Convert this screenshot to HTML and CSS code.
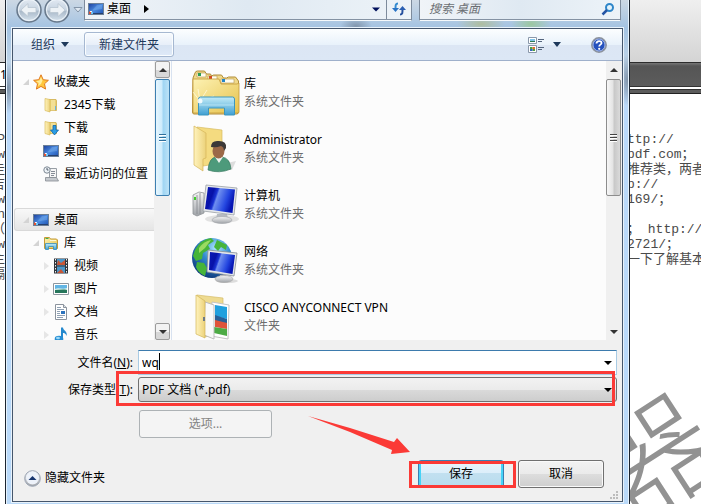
FILE: index.html
```html
<!DOCTYPE html>
<html lang="zh-CN">
<head>
    <meta charset="UTF-8">
    <meta name="viewport" content="width=device-width, initial-scale=1.0">
    <title>另存为</title>
    <link rel="stylesheet" href="styles.css">
</head>
<body>
    <!-- Shared icon shapes -->
    <svg class="defs" width="0" height="0" aria-hidden="true">
        <defs>
            <linearGradient id="g-blue" x1="0" y1="0" x2="1" y2="1">
                <stop offset="0" stop-color="#1c3f9c"/><stop offset=".5" stop-color="#4a8be0"/><stop offset="1" stop-color="#1d4fae"/>
            </linearGradient>
            <linearGradient id="g-screen" x1="0" y1="0" x2="1" y2=".3">
                <stop offset="0" stop-color="#0a18b8"/><stop offset=".3" stop-color="#0712a8"/><stop offset=".42" stop-color="#1a34d4"/><stop offset=".48" stop-color="#6f8ff0"/><stop offset=".8" stop-color="#2446e0"/><stop offset="1" stop-color="#0716b4"/>
            </linearGradient>
            <linearGradient id="g-folder" x1="0" y1="0" x2="1" y2="1">
                <stop offset="0" stop-color="#fdf2b4"/><stop offset="1" stop-color="#e6c24c"/>
            </linearGradient>
            <linearGradient id="g-flap" x1="0" y1="0" x2="1" y2="0">
                <stop offset="0" stop-color="#fff3bd"/><stop offset="1" stop-color="#ecd27a"/>
            </linearGradient>
            <linearGradient id="g-aqua" x1="0" y1="0" x2="0" y2="1">
                <stop offset="0" stop-color="#c3ecf8"/><stop offset="1" stop-color="#3f9fd2"/>
            </linearGradient>
            <linearGradient id="g-metal" x1="0" y1="0" x2="0" y2="1">
                <stop offset="0" stop-color="#f6f6f6"/><stop offset="1" stop-color="#9fa3a8"/>
            </linearGradient>
            <radialGradient id="g-globe" cx=".6" cy=".25" r=".8">
                <stop offset="0" stop-color="#aee6ff"/><stop offset=".45" stop-color="#3189cf"/><stop offset="1" stop-color="#0c3578"/>
            </radialGradient>
            <linearGradient id="g-nav" x1="0" y1="0" x2="0" y2="1">
                <stop offset="0" stop-color="#e4ebf3"/><stop offset=".5" stop-color="#c7d4e1"/><stop offset=".55" stop-color="#a9b9c9"/><stop offset="1" stop-color="#dbe7f1"/>
            </linearGradient>
        </defs>
        <symbol id="i-desktop" viewBox="0 0 16 16">
            <rect x=".5" y="2.500" width="15" height="11" fill="url(#g-blue)" stroke="#6c8097"/>
            <path d="M1 12h14v1H1z" fill="#26406e"/>
            <path d="M4 9.500 9 4h5v4z" fill="#8bbcf2" opacity=".35"/>
            <path d="M1 10.500h2V13H1z" fill="#e3502e"/><path d="M3 11h2v2H3z" fill="#6ec4f2"/><path d="M2 10h2v1H2z" fill="#f4f4f4"/>
        </symbol>
        <symbol id="i-folder" viewBox="0 0 16 16">
            <path d="M6 2.500h7l.5 1v10H6z" fill="#e9cf74" stroke="#cfae4c" stroke-width=".8"/>
            <path d="M2 1.500l5 1v12.500l-5-1.500z" fill="url(#g-flap)" stroke="#d9bb5c" stroke-width=".7"/>
            <path d="M9 3v10.500M11 3v10.500" stroke="#fbf0b9"/><path d="M12.500 9v4" stroke="#6cb2dd"/>
        </symbol>
        <symbol id="i-library" viewBox="0 0 16 16">
            <path d="M1.500 2.500h5l1 1.500h6l1 1v8.500h-13z" fill="url(#g-folder)" stroke="#c59b35"/>
            <path d="M2.500 3.500h3" stroke="#3fae4c"/><path d="M7 5.500h6" stroke="#fff8d6"/>
            <path d="M2.500 14.500v-6h11v6h-3v-3h-5v3z" fill="url(#g-aqua)" stroke="#358cba" stroke-width=".8"/>
        </symbol>
        <symbol id="i-pc" viewBox="0 0 48 48">
            <ellipse cx="30" cy="38" rx="17" ry="4" fill="#000" opacity=".1"/>
            <path d="M1 14l6-3 5 1v20l-7 3-4-2z" fill="url(#g-metal)" stroke="#8e9296" stroke-width=".8"/>
            <path d="M5 14v19M8 12v21" stroke="#85898e" stroke-width=".8"/><path d="M2 16h2v3H2z" fill="#3fce2c"/>
            <path d="M25 33h10l1 5h-12z" fill="#b6bac0"/>
            <ellipse cx="30" cy="39" rx="10" ry="3.500" fill="url(#g-metal)" stroke="#9da1a6" stroke-width=".6"/>
            <path d="M14 4l31 3-3 27-31-4z" fill="#e6e8eb" stroke="#999fa6" stroke-width=".8"/>
            <path d="M16 6l27 2.500-2.500 23.500L13 28z" fill="url(#g-screen)"/>
        </symbol>
    </svg>

    <!-- Document window behind the dialog -->
    <div class="viewer">
        <div class="viewer-tools"></div>
        <div class="viewer-band"><span class="page-no">1</span></div>
        <div class="viewer-rule"></div>
        <div class="doc">
            <div class="doc-left">
                <p>P</p><p>w</p><p>走</p><p>吉</p><p>w</p><p>n</p><p>（</p><p>w</p><p>主</p><p>隔</p>
            </div>
            <div class="doc-right">
                <p>ttp://</p><p>pdf.com；</p><p>推荐类，两者</p><p>p://</p><p>169/；</p><p>&nbsp;</p><p>； http://</p><p>2721/；</p><p>一下了解基本</p>
            </div>
        </div>
        <div class="watermark">器</div>
    </div>

    <div class="dialog">
        <!-- Address row -->
        <div class="titlebar">
            <div class="nav-buttons">
                <button class="round" aria-label="后退"><svg width="26" height="26" viewBox="0 0 26 26"><circle cx="13" cy="13" r="12" fill="url(#g-nav)" stroke="#68798c" stroke-width="1.500"/><circle cx="13" cy="13" r="10.500" fill="none" stroke="#eff5fa"/><path d="M5 13l7-6.500v4h8v5h-8v4z" fill="#edf2f6" stroke="#b9c5d0" stroke-width=".8"/></svg></button>
                <button class="round" aria-label="前进"><svg width="26" height="26" viewBox="0 0 26 26"><circle cx="13" cy="13" r="12" fill="url(#g-nav)" stroke="#68798c" stroke-width="1.500"/><circle cx="13" cy="13" r="10.500" fill="none" stroke="#eff5fa"/><path d="M21 13l-7-6.500v4H6v5h8v4z" fill="#edf2f6" stroke="#b9c5d0" stroke-width=".8"/></svg></button>
                <svg class="history" width="10" height="6" viewBox="0 0 10 6"><path d="M1 .500h8L5 5z" fill="#dfe8f1" stroke="#8495a8"/></svg>
            </div>
            <div class="address">
                <svg width="16" height="16"><use href="#i-desktop"/></svg>
                <span class="crumb">桌面</span>
                <svg width="5" height="8" viewBox="0 0 5 8"><path d="M0 0l5 4-5 4z"/></svg>
                <svg class="drop" width="8" height="5" viewBox="0 0 8 5"><path d="M0 .500h8L4 4.500z" fill="#00105c"/></svg>
                <button class="refresh" aria-label="刷新"><svg width="16" height="16" viewBox="0 0 16 16"><path d="M7 2.500C4.500 2.500 4.500 4 4.500 8" fill="none" stroke="#338bd0" stroke-width="2"/><path d="M1 7h7l-3.500 4z" fill="#2873c5"/><path d="M9 13.500c2.500 0 2.500-1.500 2.500-5" fill="none" stroke="#244f9e" stroke-width="2"/><path d="M8 9h7l-3.500-4z" fill="#2a5fb2"/></svg></button>
            </div>
            <div class="search">
                <input type="text" placeholder="搜索 桌面" aria-label="搜索 桌面">
                <svg width="14" height="14" viewBox="0 0 14 14"><circle cx="8.500" cy="5.500" r="3.500" fill="#e2f3fc" stroke="#2e86c9" stroke-width="2"/><path d="M6 8l-4.500 4.500" stroke="#2455a4" stroke-width="2.500"/></svg>
            </div>
        </div>

        <div class="client">
            <div class="toolbar">
                <button class="organize">组织 <svg width="8" height="5" viewBox="0 0 8 5"><path d="M0 0h8L4 5z"/></svg></button>
                <button class="new-folder">新建文件夹</button>
                <button class="views" aria-label="更改视图">
                    <svg width="17" height="16" viewBox="0 0 17 16"><path d="M.5.5h8v6h-8zM.5 8.500h8v7h-8z" fill="#fff" stroke="#8a98aa"/><path d="M2 2h5v3H2z" fill="#7ec3e8"/><path d="M2 4h5v1H2z" fill="#2f7a55"/><path d="M2 10h2.500v2H2zM4.500 12H7v2H4.500z" fill="#4fa33c"/><path d="M4.500 10H7v2H4.500z" fill="#df6a36"/><path d="M2 12h2.500v2H2z" fill="#3763bd"/><path d="M10 2.500h6M10 4.500h4M10 10.500h6M10 12.500h4" stroke="#54657d"/></svg>
                    <svg width="8" height="5" viewBox="0 0 8 5"><path d="M0 0h8L4 5z"/></svg>
                </button>
                <button class="help" aria-label="帮助"><svg width="16" height="16" viewBox="0 0 16 16"><circle cx="8" cy="8" r="7.200" fill="#2450bd" stroke="#8d939c" stroke-width="1.500"/><circle cx="8" cy="8" r="6" fill="none" stroke="#dce5f8" stroke-width=".7"/><path d="M5.500 6.500C5.500 3.300 10.800 3.300 10.500 6.200 10.400 7.800 8.200 7.500 8.200 9.600" fill="none" stroke="#fff" stroke-width="1.800"/><circle cx="8.200" cy="11.800" r="1.100" fill="#fff"/></svg></button>
            </div>

            <div class="panes">
                <ul class="tree">
                    <li class="open"><svg width="16" height="16" viewBox="0 0 16 16"><path d="M8 .8l2.200 4.900 5.200.6-3.900 3.500 1.100 5.300L8 12.400l-4.600 2.700 1.100-5.300L.6 6.300l5.200-.6z" fill="#ffc63c" stroke="#e17a1f"/><path d="M8 3l1.500 3.600L8 10 5 12l.8-3L3 7l3.500-.5z" fill="#ffed9b"/></svg>收藏夹</li>
                    <li class="sub"><svg width="16" height="16"><use href="#i-folder"/></svg>2345下载</li>
                    <li class="sub"><svg width="16" height="16" viewBox="0 0 16 16"><use href="#i-folder" width="16" height="16"/><path d="M10 5.500h3V10h2.500L11.500 15 7.500 10H10z" fill="#2a9ce4" stroke="#1266a8" stroke-width=".8"/></svg>下载</li>
                    <li class="sub"><svg width="16" height="16"><use href="#i-desktop"/></svg>桌面</li>
                    <li class="sub"><svg width="16" height="16" viewBox="0 0 16 16"><path d="M6.500 2.500h7v9h-7z" fill="#f6f6f6" stroke="#989ea5"/><path d="M8 5.500h4M8 7.500h4M8 9.500h3" stroke="#858c96"/><path d="M2.500 11.500h11l2 3.500h-13z" fill="#c5c9ce" stroke="#858b92" stroke-width=".8"/><circle cx="4" cy="4" r="3.200" fill="#eef3f7" stroke="#7e8994"/><path d="M4 2v2h1.500" fill="none" stroke="#4e5b68"/></svg>最近访问的位置</li>
                    <li class="space"></li>
                    <li class="open selected"><svg width="16" height="16"><use href="#i-desktop"/></svg>桌面</li>
                    <li class="open sub"><svg width="16" height="16"><use href="#i-library"/></svg>库</li>
                    <li class="closed"><svg width="16" height="16" viewBox="0 0 16 16"><path d="M1 .500h14v15H1z" fill="#30353b"/><path d="M4 1h8v6.500H4zM4 8.500h8V15H4z" fill="#4b96c8"/><path d="M5 2l3 3 4-3v5H4zM5 14l3-3 3 4H4z" fill="#c95635"/><path d="M2.500 1v14M13.500 1v14" stroke="#f0f0f0" stroke-dasharray="1.500 1.500"/></svg>视频</li>
                    <li class="closed"><svg width="16" height="16" viewBox="0 0 16 16"><path d="M.5 2.500h15v11H.5z" fill="#fff" stroke="#8d969e"/><path d="M2 4h12v8H2z" fill="#62b5e4"/><path d="M2 8c4-2 7 1 12-1v2H2z" fill="#d9f3ee"/><path d="M2 9c4 0 8-1 12 0v3H2z" fill="#26765b"/></svg>图片</li>
                    <li class="closed"><svg width="16" height="16" viewBox="0 0 16 16"><path d="M2.500.500h8l3 3v12h-11z" fill="#fff" stroke="#8b939d"/><path d="M10.500.500v3h3" fill="#dce2e8" stroke="#8b939d"/><path d="M4 3.500h4M4 5.500h7M4 7.500h3M4 9.500h3M4 11.500h8M4 13.500h6" stroke="#8fa0b3"/><path d="M8 7h4v3H8z" fill="#2d73bd"/></svg>文档</li>
                    <li class="closed"><svg width="16" height="16" viewBox="0 0 16 16"><path d="M8 .500h2c0 3 5 3.500 3.500 8.500C13 6.500 11 6 10 6v6H8z" fill="#2589ce"/><ellipse cx="6" cy="12" rx="4.300" ry="3.300" fill="#278ed4"/><ellipse cx="5" cy="11" rx="2" ry="1.200" fill="#9dd8f5"/></svg>音乐</li>
                </ul>
                <div class="scroll scroll-nav">
                    <span class="arrow up"></span>
                    <span class="thumb"></span>
                    <span class="arrow down"></span>
                </div>

                <ul class="files">
                    <li>
                        <svg width="48" height="48" viewBox="0 0 48 48"><path d="M1 9l2-5q.5-2 2.500-2h7l2 3h4l1 2 2-1h8l2 3h3l2-1h7l3 4v31q0 2-2 2H2q-1.500 0-1.500-2z" fill="#f0d98a" stroke="#b08c38"/><path d="M5 4h9v4H5zM16 7h9v4h-9zM29 10h13v4H29z" fill="#fffdf0" stroke="#b4964d" stroke-width=".6"/><path d="M6 4h3v3H6z" fill="#2c9d54"/><path d="M17 7h3v3h-3z" fill="#d34b22"/><path d="M30 10h3v3h-3z" fill="#2386c8"/><path d="M1 10h26l2 5h16l2-1v29q0 1-1.500 1H2q-1 0-1-1z" fill="url(#g-folder)" stroke="#c49a38" stroke-width=".8"/><path d="M8 32L6 20M8 32l7-11M8 32L1 23M8 32l14-5" stroke="#fffce6" stroke-width=".7"/><path d="M6.500 46V30q0-2 2-2h32q2 0 2 2v16h-10v-7h-16v7z" fill="url(#g-aqua)" stroke="#3c96be"/><path d="M7 36h35" stroke="#d6f5fc" opacity=".6"/><circle cx="8" cy="32" r="2.500" fill="#fff" opacity=".85"/></svg>
                        <div><h3>库</h3><p>系统文件夹</p></div>
                    </li>
                    <li>
                        <svg width="48" height="48" viewBox="0 0 48 48"><path d="M30 39l14-3-4 9H28z" opacity=".12"/><path d="M5 2l25 3v33l-19 3z" fill="#f4db80" stroke="#d7bb62" stroke-width=".7"/><path d="M2 1l12 7v25l-3 1v12L2 40z" fill="url(#g-flap)" stroke="#d5b65a" stroke-width=".7"/><path d="M16 45q1-13 9-13h5q8 1 9 12-12 5-23 1z" fill="#4d9a7b" stroke="#397b62" stroke-width=".7"/><path d="M23 32l4 6 4-6z" fill="#eef3ee"/><ellipse cx="26.500" cy="26" rx="6" ry="7.500" fill="#9c6948"/><path d="M19 22q0-7 8-6 8 0 7 7l-2 3q0-4-3-5-5 2-10 1z" fill="#3c3938"/></svg>
                        <div><h3>Administrator</h3><p>系统文件夹</p></div>
                    </li>
                    <li>
                        <svg width="48" height="48"><use href="#i-pc"/></svg>
                        <div><h3>计算机</h3><p>系统文件夹</p></div>
                    </li>
                    <li>
                        <svg width="48" height="48" viewBox="0 0 48 48"><circle cx="20" cy="21" r="20" fill="url(#g-globe)"/><path d="M3 13Q9 2 19 1l3 3-6 4 2 4-7 4-1 6-6 2-3-5zM25 3l10 5-1 5-5-3-3 4-4-4zM5 25l7 1 3 5-2 8q-7-3-9-9z" fill="#46b43a"/><path d="M7 11q5-7 12-8l-6 8-6 5z" fill="#9adb62"/><ellipse cx="35" cy="44" rx="11" ry="2" opacity=".12"/><path d="M28 38h6v4h-6z" fill="#babec3"/><ellipse cx="32" cy="42" rx="9" ry="3.500" fill="url(#g-metal)" stroke="#aaa" stroke-width=".7"/><path d="M16 13l29 3-3 23-27-4z" fill="#e4e7ea" stroke="#868d94" stroke-width=".8"/><path d="M18 15l25 3-2.500 19L17 33z" fill="url(#g-screen)"/></svg>
                        <div><h3>网络</h3><p>系统文件夹</p></div>
                    </li>
                    <li>
                        <svg width="48" height="48" viewBox="0 0 48 48"><path d="M5 2l26 3v36l-19 3z" fill="#eedb91" stroke="#d5bc69" stroke-width=".7"/><path d="M20 9l17 3-1 34-17-3z" fill="#fff" stroke="#c4c4c4"/><path d="M23 12l12 2v12l-12-3z" fill="#20a0de"/><path d="M23 22l12 4v6l-12-3z" fill="#286098"/><path d="M23 27l12 3v6l-12-2z" fill="#e0543a"/><path d="M22 34l13 2v7l-13-3z" fill="#4dab45"/><path d="M13 9l9 3v34l-10-4z" fill="#f9f9f9" stroke="#bcbcbc"/><path d="M4 2l9 6v37l-9-4z" fill="url(#g-flap)" stroke="#d2b657" stroke-width=".7"/><path d="M12 24v4" stroke="#6d7a85" stroke-width="2"/></svg>
                        <div><h3>CISCO ANYCONNECT VPN</h3><p>文件夹</p></div>
                    </li>
                </ul>
                <div class="scroll scroll-files">
                    <span class="arrow up"></span>
                    <span class="thumb"></span>
                    <span class="arrow down"></span>
                </div>
            </div>

            <form class="footer">
                <label for="filename">文件名(<u>N</u>):</label>
                <div class="field">
                    <input type="text" id="filename" value="wq">
                    <span class="caret"></span>
                </div>
                <label for="filetype">保存类型(<u>T</u>):</label>
                <div class="field">
                    <select id="filetype"><option>PDF 文档 (*.pdf)</option></select>
                    <span class="mark mark-type"></span>
                </div>
                <button type="button" class="options" disabled>选项...</button>
                <div class="actions">
                    <button type="button" class="hide-folders"><svg width="17" height="17" viewBox="0 0 17 17"><circle cx="8.500" cy="8.500" r="7.800" fill="url(#g-metal)" stroke="#9aa4b4"/><circle cx="8.500" cy="8" r="6.500" fill="#edf2fa"/><path d="M4.500 10l4-4 4 4z" fill="#17356e"/></svg>隐藏文件夹</button>
                    <div class="save-wrap">
                        <button type="button" class="btn save">保存</button>
                        <span class="mark mark-save"></span>
                        <svg class="pointer" width="104" height="42" viewBox="0 0 104 42"><path d="M2 0l42 12 44 14 3-4 13 14-19 2 1-4-42-18z" fill="#fb3a36"/></svg>
                    </div>
                    <button type="button" class="btn">取消</button>
                    <svg class="grip" width="8" height="8" viewBox="0 0 8 8"><path d="M6 0h2v2H6zM3 3h2v2H3zM6 3h2v2H6zM0 6h2v2H0zM3 6h2v2H3zM6 6h2v2H6z" fill="#bcbcbc"/></svg>
                </div>
            </form>
        </div>
    </div>
</body>
</html>
```

FILE: styles.css
```css
* {
    box-sizing: border-box;
}

body {
    margin: 0;
    height: 100vh;
    overflow: hidden;
    position: relative;
    background: #fff;
    font-family: "Noto Sans", "Noto Sans CJK SC", sans-serif;
    font-size: 12px;
    line-height: 18px;
    color: #000;
}

ul, p, h3 {
    margin: 0;
    padding: 0;
    list-style: none;
    font-size: 12px;
    font-weight: normal;
}

button, input, select {
    font: inherit;
    color: inherit;
    margin: 0;
    padding: 0;
    border: none;
    background: none;
    outline: none;
}

svg {
    display: block;
    flex: none;
}

.defs {
    position: absolute;
}

/* document window */
.viewer {
    position: relative;
    height: 100vh;
    overflow: hidden;
}

.viewer-tools {
    height: 62px;
    background: linear-gradient(#efefef, #d4d4d4);
}

.viewer-band {
    height: 25px;
    border-top: 1px solid #2c2c2c;
    border-bottom: 1px solid #333;
    background: linear-gradient(#777 0, #555 3px, #5c5c5c 100%);
}

.page-no {
    display: block;
    width: 5px;
    height: 23px;
    line-height: 23px;
    background: #fff;
}

.viewer-rule {
    height: 7px;
    border-top: 2px solid #fff;
    background: linear-gradient(#333 1px, #5c5c5c 1px 4px, #222 4px);
}

.doc {
    display: flex;
    justify-content: space-between;
    padding-top: 38px;
    font-family: "Liberation Mono", "Noto Sans CJK SC", monospace;
    color: #4a4a4a;
}

.doc p {
    height: 15px;
    font-size: 13px;
    line-height: 15px;
    white-space: nowrap;
}

.doc-left {
    width: 5px;
    overflow: hidden;
}

.doc-left p {
    display: flex;
    justify-content: flex-end;
}

.doc-right {
    width: 74px;
    overflow: hidden;
}

.watermark {
    position: absolute;
    right: -10px;
    bottom: -8px;
    font-family: "Noto Sans CJK SC", sans-serif;
    font-size: 120px;
    font-weight: 300;
    line-height: 120px;
    color: #929292;
    transform: rotate(-33deg);
}

/* dialog frame */
.dialog {
    position: absolute;
    top: 0;
    left: 5px;
    right: 71px;
    padding: 0 6px 2px;
    border: solid #1b2430;
    border-width: 0 1px;
    background:
        radial-gradient(ellipse 20px 12px at 525px 24px, #9cc7a0, transparent),
        radial-gradient(ellipse 24px 10px at 475px 24px, #aebd9f, transparent),
        radial-gradient(ellipse 16px 9px at 350px 26px, #8397ad, transparent),
        radial-gradient(ellipse 10px 26px at 2px 88px, #7f93a9, transparent),
        radial-gradient(ellipse 10px 26px at 622px 80px, #7f93a9, transparent),
        linear-gradient(#ccd8e4 0, #a4c3e2 28px, #bdd3e8 60px, #bad9fa 110px, #b9d9f9 100%);
    box-shadow: inset 1px 0 #e6f2fc, inset -1px 0 #e6f2fc;
}

.titlebar {
    display: flex;
    height: 28px;
    padding: 0 2px 0 4px;
}

.nav-buttons {
    display: flex;
    align-items: center;
    width: 68px;
    height: 20px;
    gap: 2px;
}

.round {
    flex: none;
    width: 26px;
    height: 26px;
}

.history {
    margin-left: 1px;
}

.address,
.search {
    display: flex;
    align-items: center;
    height: 21px;
    border: 1px solid #7d8b9c;
    border-top: none;
    border-bottom-color: #f5f9fc;
    background: linear-gradient(90deg, #f0f4f8, #dfe9f2 50%, #edf3f8);
    box-shadow: inset 0 -1px #8492a3;
}

.address {
    flex: 1;
    padding: 0 0 2px 3px;
}

.crumb {
    margin: 0 13px 0 3px;
}

.drop {
    margin-left: auto;
}

.refresh {
    display: flex;
    align-items: center;
    justify-content: center;
    width: 25px;
    height: 20px;
    margin-left: 6px;
    border-left: 1px solid #7d8b9c;
}

.search {
    width: 202px;
    margin-left: 7px;
    padding: 0 5px 2px 9px;
}

.search input {
    flex: 1;
    min-width: 0;
}

.search input::placeholder {
    color: #6c7074;
    font-style: italic;
    opacity: 1;
}

.client {
    border: 1px solid #45566c;
    background: #f0f0f0;
    box-shadow: 0 0 0 1px #e8f2fb;
}

/* toolbar */
.toolbar {
    display: flex;
    align-items: center;
    height: 32px;
    padding: 0 15px 0 18px;
    border-bottom: 1px solid #9fb0cb;
    background: linear-gradient(#fcfeff 0, #e9f2fb 50%, #dce6f4 51%, #dce7f5 100%);
    color: #1e395b;
    fill: #1e395b;
}

.organize,
.views {
    display: flex;
    align-items: center;
    gap: 6px;
}

.new-folder {
    width: 90px;
    height: 25px;
    margin-left: 15px;
    border: 1px solid #a6b8d1;
    border-radius: 3px;
    background: linear-gradient(#f8fbfe 0, #e8eff9 50%, #d6e2f2 51%, #dfeaf8 100%);
    box-shadow: inset 0 0 0 1px #fafdff;
}

.views {
    gap: 8px;
    margin-left: auto;
}

.help {
    margin-left: 30px;
}

/* list panes */
.panes {
    display: flex;
    height: 279px;
    background: #fcfcfc;
}

.tree {
    width: 141px;
    padding-top: 9px;
    overflow: hidden;
}

.tree li {
    position: relative;
    display: flex;
    align-items: center;
    gap: 5px;
    height: 23px;
    padding-left: 20px;
    white-space: nowrap;
}

.tree .sub {
    padding-left: 30px;
}

.tree .closed {
    padding-left: 40px;
}

.tree .selected {
    border: 1px solid #d9d9d9;
    border-right: none;
    border-radius: 3px 0 0 3px;
    margin-left: 1px;
    padding-left: 18px;
    background: linear-gradient(#f8f8f8, #e5e5e5);
}

.open::before {
    content: "";
    position: absolute;
    left: 10px;
    top: 9px;
    border-left: 6px solid transparent;
    border-bottom: 6px solid #d4d4d4;
}

.open.selected::before {
    left: 8px;
    top: 8px;
}

.open.sub::before {
    left: 20px;
}

.closed::before {
    content: "";
    position: absolute;
    left: 31px;
    top: 8px;
    border-left: 5px solid #e6e6e6;
    border-top: 4px solid transparent;
    border-bottom: 4px solid transparent;
}

.scroll {
    display: flex;
    flex-direction: column;
    width: 16px;
    background: #f0f0f0;
}

.arrow {
    display: flex;
    align-items: center;
    justify-content: center;
    height: 17px;
}

.arrow::after {
    content: "";
    border: 4px solid transparent;
}

.up::after {
    border-top: none;
    border-bottom-color: #333;
}

.down {
    margin-top: auto;
}

.down::after {
    border-bottom: none;
    border-top-color: #333;
}

.scroll-nav .arrow {
    margin-left: 1px;
    border: 1px solid #9c9c9c;
    border-radius: 2px;
    background: linear-gradient(#f3f3f3 50%, #d8d8d8 51%);
}

.scroll-nav .down {
    margin-top: auto;
}

.thumb {
    display: flex;
    align-items: center;
    justify-content: center;
    height: 117px;
    margin: 1px 1px 0 0;
    border: 1px solid #8d8d8d;
    border-radius: 2px;
    background: linear-gradient(90deg, #f7f7f7, #e4e4e4 45%, #c8c8c8 55%, #dadada);
}

.thumb::after {
    content: "";
    width: 7px;
    height: 8px;
    background: repeating-linear-gradient(#444 0 1px, #fff 1px 2px, transparent 2px 3px);
}

.scroll-nav .thumb {
    margin: 1px 0 0 1px;
    border-color: #3c7fb1;
    background: linear-gradient(90deg, #e6f6fe, #cdebfc 45%, #9fd5f3 55%, #bde3f7);
}

.scroll-nav .thumb::after {
    background: repeating-linear-gradient(#2f6f9c 0 1px, #fff 1px 2px, transparent 2px 3px);
}

.files {
    flex: 1;
    min-width: 0;
    margin-left: 1px;
    padding: 4px 0 0 20px;
    border-left: 1px solid #d8e2f0;
    overflow: hidden;
}

.files li {
    display: flex;
    align-items: center;
    gap: 4px;
    height: 56px;
}

.files p {
    color: #6d6d6d;
}

/* file name and buttons */
.footer {
    display: grid;
    grid-template-columns: 120px 1fr;
    column-gap: 5px;
    row-gap: 2px;
    padding: 10px 5px 0 0;
}

.footer label {
    align-self: center;
    text-align: right;
    white-space: nowrap;
}

.field {
    position: relative;
    display: flex;
    height: 25px;
}

.field input,
.field select {
    flex: 1;
    min-width: 0;
    padding: 0 4px;
    border: 1px solid #a9cbe4;
    background: #fff;
}

.field input {
    padding-left: 3px;
    border-top-color: #3d7bad;
}

.field select {
    appearance: none;
    padding-left: 3px;
    border-color: #707070;
    border-radius: 3px;
    background: linear-gradient(#f2f2f2 0, #ebebeb 50%, #dadada 51%, #cdcdcd 100%);
}

.field::after {
    content: "";
    position: absolute;
    right: 5px;
    top: 11px;
    border: 4px solid transparent;
    border-top-color: #000;
    border-bottom: none;
    pointer-events: none;
}

.caret {
    position: absolute;
    left: 21px;
    top: 3px;
    width: 1px;
    height: 17px;
    background: #000;
}

.mark {
    position: absolute;
    border: 3px solid #fb3a36;
    pointer-events: none;
}

.mark-type {
    inset: -6px 2px -4px -22px;
}

.mark-save {
    inset: 1px -12px 0 -9px;
}

.options {
    grid-column: 2;
    width: 133px;
    height: 28px;
    margin: 6px 0 0 1px;
    border: 1px solid #adb2b5;
    border-radius: 3px;
    background: #f4f4f4;
    color: #838383;
}

.actions {
    position: relative;
    grid-column: 1 / -1;
    display: flex;
    align-items: center;
    padding: 20px 13px 13px 11px;
}

.hide-folders {
    display: flex;
    align-items: center;
    gap: 4px;
    margin: 8px auto 0 0;
}

.save-wrap {
    position: relative;
    margin-right: 14px;
}

.btn {
    display: block;
    width: 86px;
    height: 28px;
    border: 1px solid #707070;
    border-radius: 3px;
    background: linear-gradient(#f2f2f2 0, #ebebeb 50%, #dddddd 51%, #cfcfcf 100%);
    box-shadow: inset 0 0 0 1px #fafafa;
}

.save {
    border-color: #3c7fb1;
    background: linear-gradient(#eaf4fb 0, #dceefa 45%, #c2e0f0 46%, #b8dcee 100%);
    box-shadow: inset 2px 0 #46d3f7, inset -2px 0 #46d3f7;
}

.pointer {
    position: absolute;
    right: 94px;
    top: -44px;
}

.grip {
    position: absolute;
    right: -1px;
    bottom: 2px;
}
```
